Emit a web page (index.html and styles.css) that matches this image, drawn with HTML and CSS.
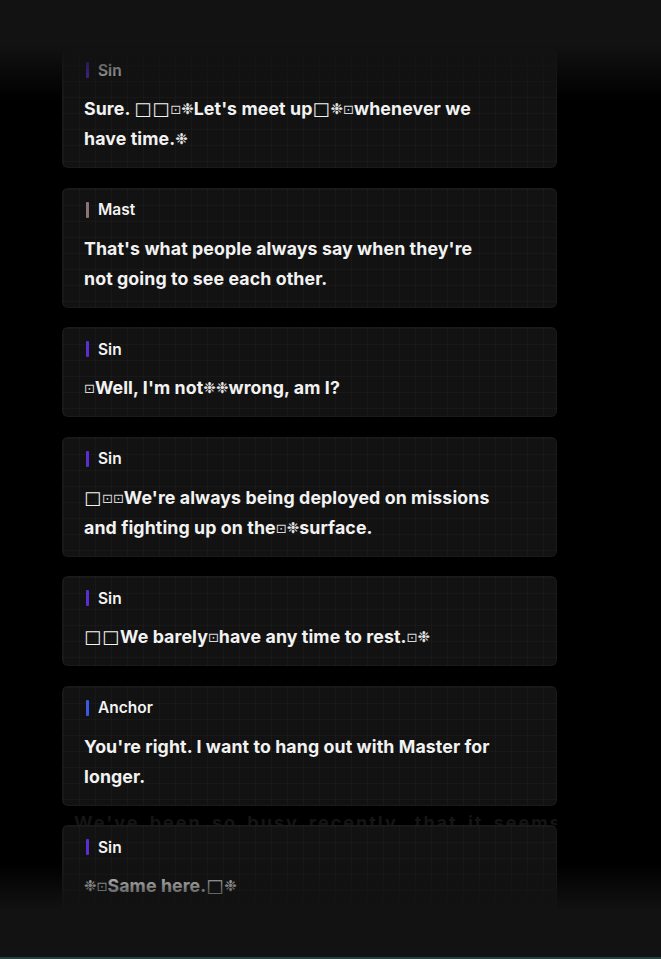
FILE: index.html
```html
<html>

<head>
    <link rel="stylesheet" href="styles.css">
</head>

<body>
    <div class="fade-top"></div>

    <main class="log">
        <div class="line">
            <div class="speaker"><span class="tag tag-sin"></span>Sin</div>
            <p class="say">Sure. <span class="g box">□□</span><span class="g dot">⊡</span><span class="g flr">❉</span>Let's meet up<span class="g box">□</span><span class="g flr">❉</span><span class="g dot">⊡</span>whenever we have time.<span class="g flr">❉</span></p>
        </div>
        <div class="line">
            <div class="speaker"><span class="tag tag-mast"></span>Mast</div>
            <p class="say">That's what people always say when they're not going to see each other.</p>
        </div>
        <div class="line">
            <div class="speaker"><span class="tag tag-sin"></span>Sin</div>
            <p class="say"><span class="g dot">⊡</span>Well, I'm not<span class="g flr">❉❉</span>wrong, am I?</p>
        </div>
        <div class="line">
            <div class="speaker"><span class="tag tag-sin"></span>Sin</div>
            <p class="say"><span class="g box">□</span><span class="g dot">⊡⊡</span>We're always being deployed on missions and fighting up on the<span class="g dot">⊡</span><span class="g flr">❉</span>surface.</p>
        </div>
        <div class="line">
            <div class="speaker"><span class="tag tag-sin"></span>Sin</div>
            <p class="say"><span class="g box">□□</span>We barely<span class="g dot">⊡</span>have any time to rest.<span class="g dot">⊡</span><span class="g flr">❉</span></p>
        </div>
        <div class="line">
            <div class="speaker"><span class="tag tag-anchor"></span>Anchor</div>
            <p class="say">You're right. I want to hang out with Master for longer.</p>
        </div>
        <div class="ghost">We've been so busy recently, that it seems totally</div>
        <div class="line">
            <div class="speaker"><span class="tag tag-sin"></span>Sin</div>
            <p class="say"><span class="g flr">❉</span><span class="g dot">⊡</span>Same here.<span class="g box">□</span><span class="g flr">❉</span></p>
        </div>
    </main>

    <div class="fade-bottom"></div>
</body>

</html>
```

FILE: styles.css
```css
* {
    -webkit-box-sizing: border-box;
    box-sizing: border-box;
}

html,
body {
    background: #000;
}

body {
    margin: 0;
    height: 959px;
    overflow: hidden;
    font-family: Inter, 'DejaVu Sans', sans-serif;
    color: #f2f2f2;
}

.log {
    display: flex;
    flex-direction: column;
    width: 495px;
    margin-left: 62px;
    padding-top: 48px;
}

.line {
    background-color: #121212;
    background-image:
        linear-gradient(rgba(255, 255, 255, .022) 1px, transparent 1px),
        linear-gradient(90deg, rgba(255, 255, 255, .022) 1px, transparent 1px);
    background-size: 16px 16px;
    border: solid 1px rgba(255, 255, 255, .035);
    border-radius: 6px;
    padding: 12px 56px 13px 21px;
}

.line+.line {
    margin-top: 19.5px;
}

.speaker {
    display: flex;
    align-items: center;
    gap: 9px;
    height: 18px;
    padding-left: 2px;
    font-size: 15.5px;
    font-weight: 600;
    color: #f4f4f4;
}

.tag {
    width: 3px;
    height: 16px;
    border-radius: 1px;
}

.tag-sin {
    background: #5a2fd2;
}

.tag-mast {
    background: #8c7474;
}

.tag-anchor {
    background: #3c58e6;
}

.say {
    margin: 15px 0 0;
    font-size: 17.75px;
    font-weight: 700;
    line-height: 30px;
    letter-spacing: .1px;
}

/* stand-in glyphs from the game text */
.g {
    font-family: 'DejaVu Sans', sans-serif;
    font-weight: 400;
    letter-spacing: 0;
    line-height: 1;
}

.box {
    font-size: 18px;
    font-weight: 700;
    letter-spacing: 1px;
}

.dot {
    font-size: 13px;
    color: #d8d8d8;
    vertical-align: 1px;
}

.flr {
    font-size: 15px;
    color: #e2e2e2;
    vertical-align: 1px;
}

.ghost {
    height: 19.5px;
    overflow: hidden;
    padding: 2px 12px 0;
    font-size: 18px;
    font-weight: 700;
    line-height: 30px;
    letter-spacing: 2px;
    word-spacing: 4px;
    white-space: nowrap;
    color: #151515;
}

.ghost+.line {
    margin-top: 0;
}

.fade-top {
    position: fixed;
    top: 0;
    left: 0;
    right: 0;
    height: 100px;
    background: linear-gradient(#121212 0, #121212 45px, rgba(18, 18, 18, 0) 100px);
    z-index: 2;
}

.fade-bottom {
    position: fixed;
    left: 0;
    right: 0;
    bottom: 0;
    height: 96px;
    background: linear-gradient(rgba(18, 18, 18, 0) 0, #121212 48px);
    border-bottom: solid 2px #22423b;
    z-index: 2;
}
```
